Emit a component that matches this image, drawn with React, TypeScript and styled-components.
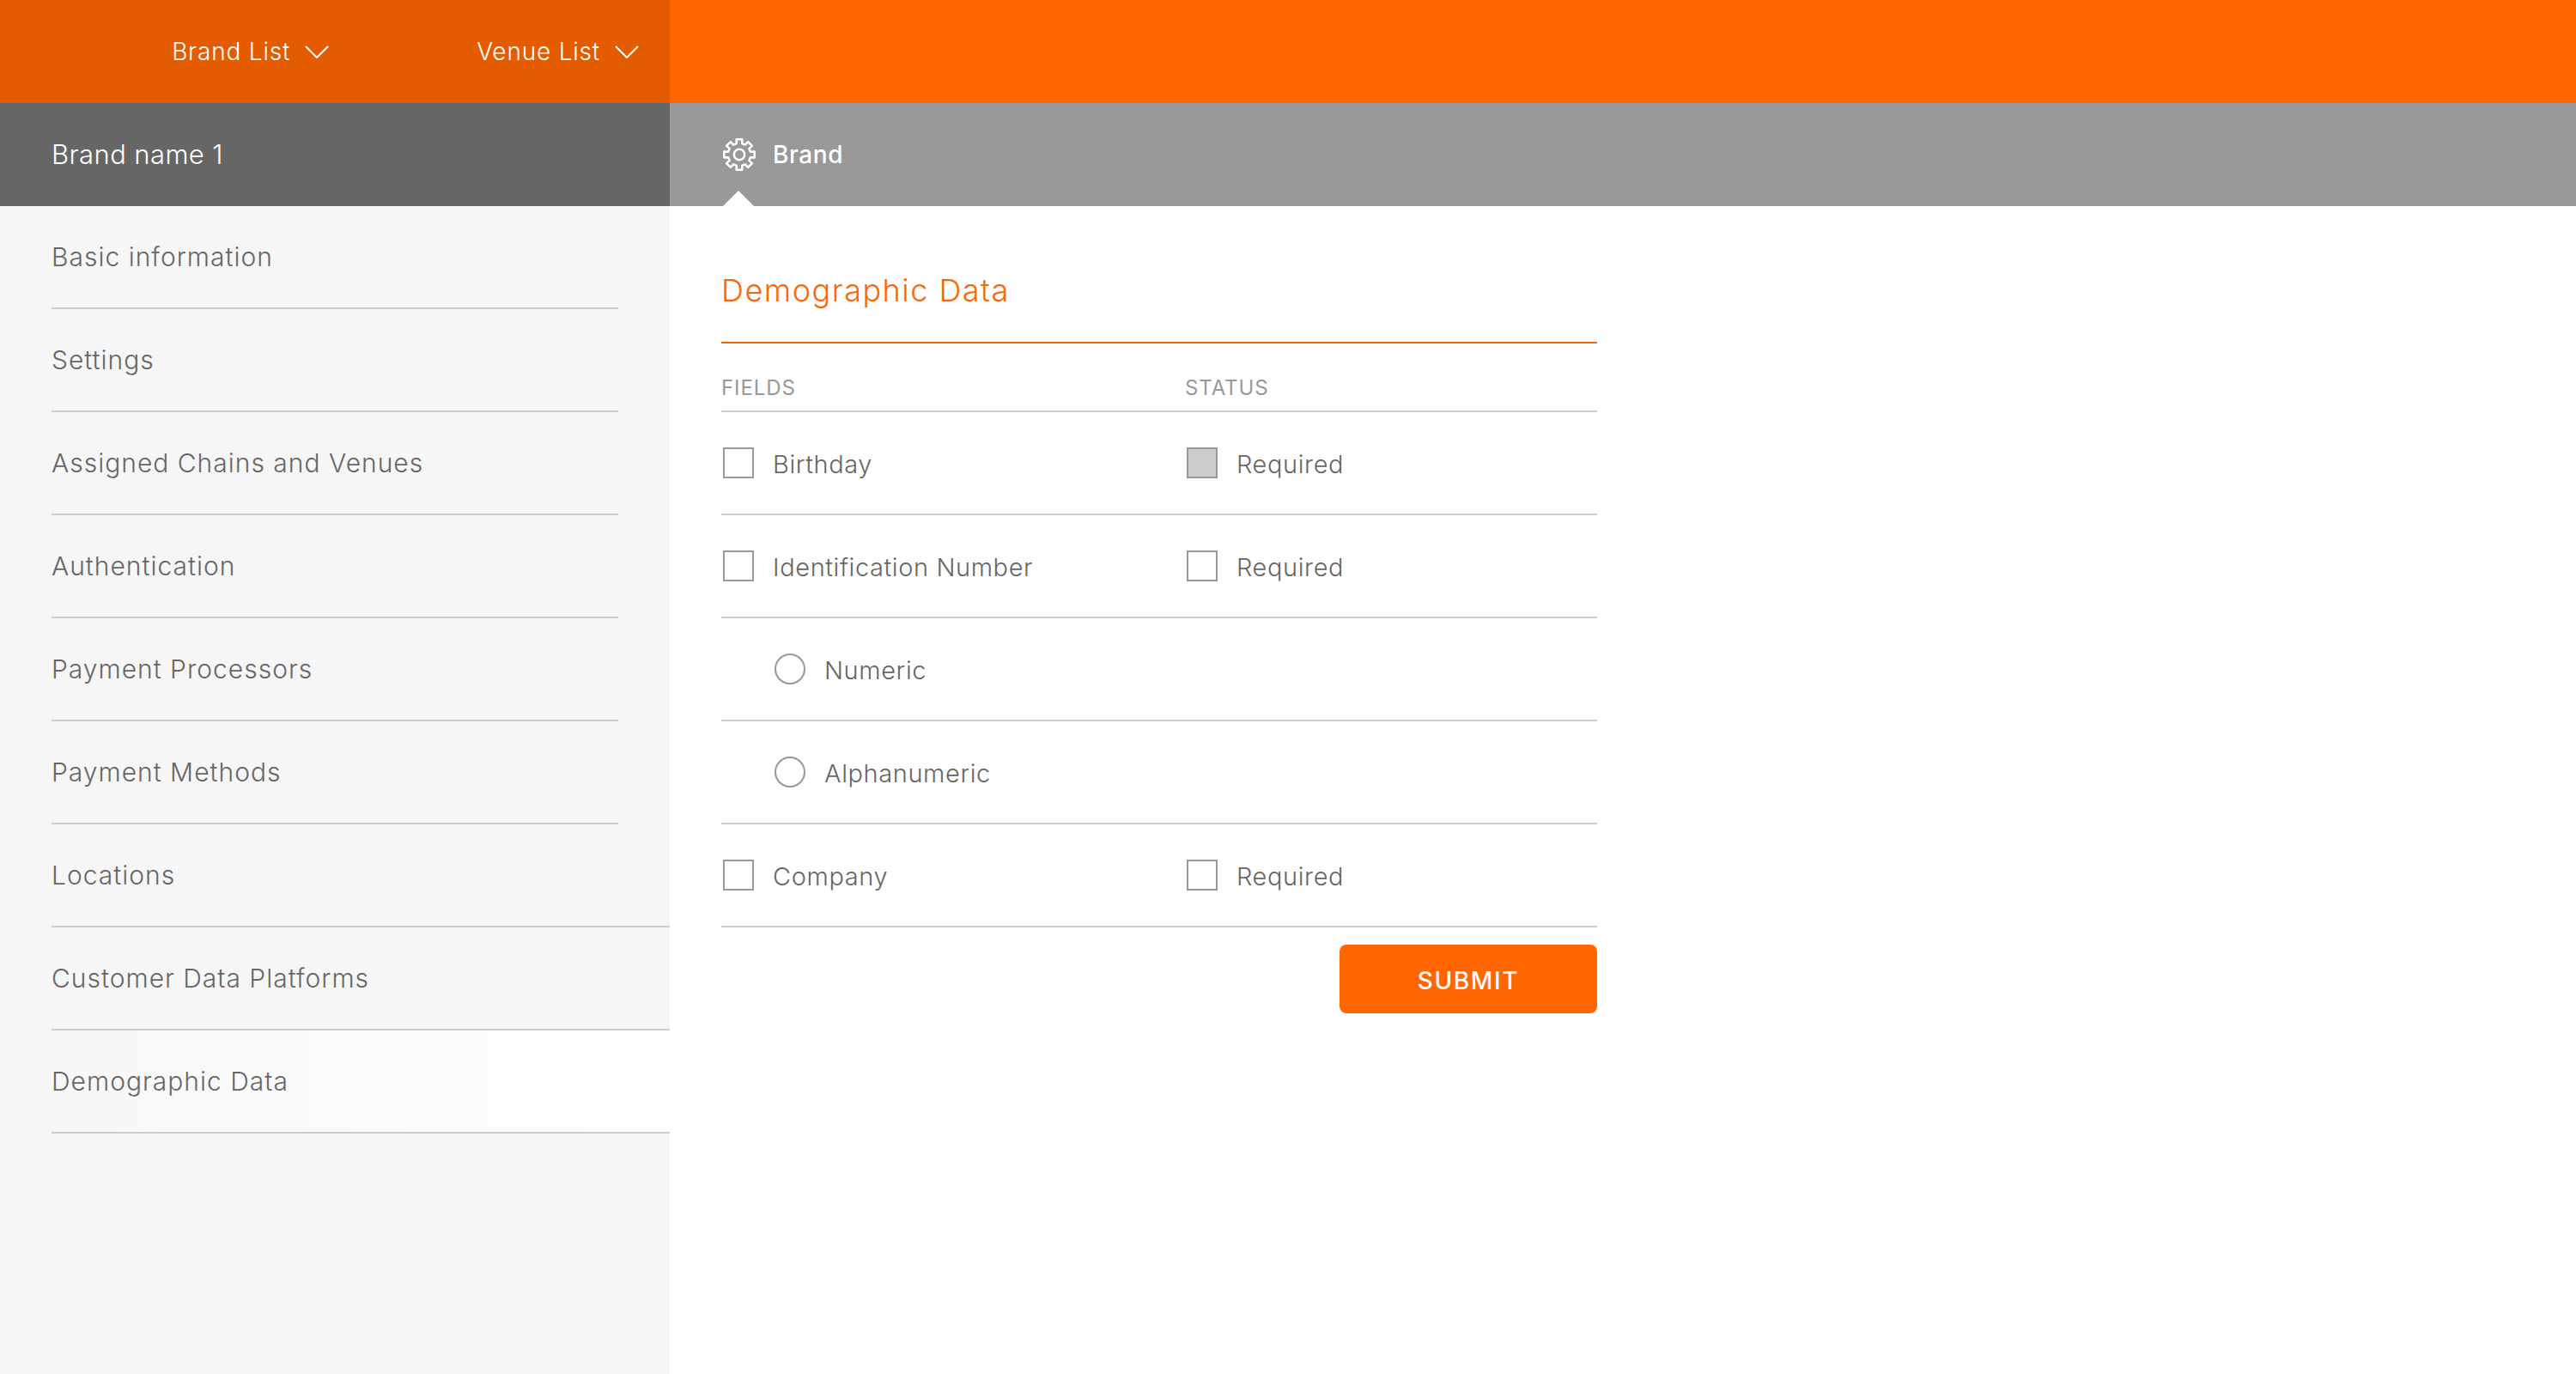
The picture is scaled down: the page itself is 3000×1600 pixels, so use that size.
import React from "react";
import styled, { createGlobalStyle } from "styled-components";

const Global = createGlobalStyle`
  html, body { margin: 0; padding: 0; background: #fff; }
  * { box-sizing: border-box; }
  body { font-family: "Inter", "Liberation Sans", sans-serif; }
`;

const Page = styled.div`
  width: 3000px;
  height: 1600px;
  display: grid;
  grid-template-columns: 780px 1fr;
  grid-template-rows: 120px 120px 1fr;
  overflow: hidden;
`;

const TopLeft = styled.div`
  background: #e35c00;
  display: flex;
  align-items: center;
  justify-content: flex-end;
  padding: 0 36px 0 0;
  gap: 172px;
`;

const TopRight = styled.div`
  background: #ff6600;
`;

const NavMenu = styled.div`
  display: flex;
  align-items: center;
  gap: 17px;
  color: #fff;
  font-size: 28px;
  font-weight: 300;
  letter-spacing: 0.8px;
`;

const BrandBar = styled.div`
  background: #666;
  color: #fff;
  display: flex;
  align-items: center;
  padding: 0 0 2px 60px;
  font-size: 31px;
  font-weight: 300;
  letter-spacing: 0.4px;
`;

const TabBar = styled.div`
  background: #999;
  padding-left: 60px;
  display: flex;
`;

const Tab = styled.div`
  position: relative;
  height: 100%;
  display: flex;
  align-items: center;
  gap: 20px;
  padding-left: 2px;
  color: #fff;
  font-size: 28px;
  font-weight: 500;
  letter-spacing: 0.6px;
  &::after {
    content: "";
    position: absolute;
    left: 2px;
    bottom: 0;
    border-left: 18px solid transparent;
    border-right: 18px solid transparent;
    border-bottom: 18px solid #fff;
  }
`;

const Sidebar = styled.nav`
  background: #f6f6f6;
  display: flex;
  flex-direction: column;
`;

const SideRow = styled.div<{ $wide?: boolean; $active?: boolean }>`
  height: 120px;
  flex: none;
  margin-left: 60px;
  margin-right: ${(p) => (p.$wide ? "0" : "60px")};
  display: flex;
  align-items: center;
  border-bottom: 2px solid #ccc;
  color: #666;
  font-size: 30px;
  font-weight: 300;
  letter-spacing: 1px;
  background: ${(p) => (p.$active ? "linear-gradient(90deg, #f7f7f7, #fff)" : "transparent")};
`;

const Main = styled.main`
  padding-left: 60px;
`;

const Form = styled.section`
  width: 1020px;
  display: flex;
  flex-direction: column;
`;

const Title = styled.h2`
  margin: 0;
  height: 160px;
  display: flex;
  align-items: center;
  border-bottom: 2px solid #ff6600;
  color: #ff6600;
  font-size: 36px;
  font-weight: 300;
  letter-spacing: 1.5px;
  padding-top: 37px;
`;

const HeadRow = styled.div`
  height: 80px;
  display: grid;
  grid-template-columns: 540px 1fr;
  align-items: center;
  border-bottom: 2px solid #ccc;
  color: #999;
  font-size: 24px;
  font-weight: 400;
  letter-spacing: 0.9px;
  padding-top: 24px;
`;

const Row = styled.div`
  height: 120px;
  display: grid;
  grid-template-columns: 540px 1fr;
  align-items: center;
  border-bottom: 2px solid #ccc;
`;

const Field = styled.label<{ $indent?: boolean }>`
  display: flex;
  align-items: center;
  gap: 22px;
  padding-left: ${(p) => (p.$indent ? "62px" : "2px")};
  color: #666;
  font-size: 29px;
  font-weight: 300;
  letter-spacing: 0.6px;
`;

const FieldText = styled.span`
  padding-top: 3px;
`;

const Box = styled.span<{ $checked?: boolean }>`
  width: 36px;
  height: 36px;
  flex: none;
  border: 2px solid #999;
  background: ${(p) => (p.$checked ? "#ccc" : "#fff")};
`;

const Radio = styled.span`
  width: 36px;
  height: 36px;
  flex: none;
  border: 2px solid #999;
  border-radius: 50%;
  background: #fff;
`;

const Actions = styled.div`
  display: flex;
  justify-content: flex-end;
  padding-top: 20px;
`;

const Submit = styled.button`
  width: 300px;
  height: 80px;
  border: 0;
  border-radius: 8px;
  background: #ff6600;
  color: #fff;
  font-family: inherit;
  font-size: 28px;
  font-weight: 500;
  letter-spacing: 1.6px;
  padding: 3px 0 0;
`;

const Chevron = () => (
  <svg width="28" height="15" viewBox="0 0 28 15" fill="none">
    <path d="M1 1 L14 14 L27 1" stroke="#fff" strokeWidth="2" />
  </svg>
);

const gearPath = (() => {
  const cx = 20, cy = 20, teeth = 8;
  const ro = 19, ri = 14;
  let d = "";
  for (let i = 0; i < teeth; i++) {
    const a = (i / teeth) * Math.PI * 2 - Math.PI / 2;
    const pts: [number, number][] = [
      [a - 0.24, ri], [a - 0.19, ro], [a + 0.19, ro], [a + 0.24, ri],
    ];
    pts.forEach(([t, r], j) => {
      const x = (cx + r * Math.cos(t)).toFixed(2);
      const y = (cy + r * Math.sin(t)).toFixed(2);
      d += `${i === 0 && j === 0 ? "M" : "L"}${x} ${y} `;
    });
  }
  return d + "Z";
})();

const Gear = () => (
  <svg width="38" height="38" viewBox="0 0 40 40" fill="none" stroke="#fff" strokeWidth="2.6" strokeLinejoin="round">
    <path d={gearPath} />
    <circle cx="20" cy="20" r="6.5" />
  </svg>
);

const menu = [
  "Basic information",
  "Settings",
  "Assigned Chains and Venues",
  "Authentication",
  "Payment Processors",
  "Payment Methods",
  "Locations",
  "Customer Data Platforms",
  "Demographic Data",
];

export default function App() {
  return (
    <Page>
      <Global />
      <TopLeft>
        <NavMenu>Brand List <Chevron /></NavMenu>
        <NavMenu>Venue List <Chevron /></NavMenu>
      </TopLeft>
      <TopRight />
      <BrandBar>Brand name 1</BrandBar>
      <TabBar>
        <Tab><Gear />Brand</Tab>
      </TabBar>
      <Sidebar>
        {menu.map((m, i) => (
          <SideRow key={m} $wide={i >= 6} $active={i === 8}>{m}</SideRow>
        ))}
      </Sidebar>
      <Main>
        <Form>
          <Title>Demographic Data</Title>
          <HeadRow><span>FIELDS</span><span>STATUS</span></HeadRow>
          <Row>
            <Field><Box /><FieldText>Birthday</FieldText></Field>
            <Field><Box $checked /><FieldText>Required</FieldText></Field>
          </Row>
          <Row>
            <Field><Box /><FieldText>Identification Number</FieldText></Field>
            <Field><Box /><FieldText>Required</FieldText></Field>
          </Row>
          <Row><Field $indent><Radio /><FieldText>Numeric</FieldText></Field></Row>
          <Row><Field $indent><Radio /><FieldText>Alphanumeric</FieldText></Field></Row>
          <Row>
            <Field><Box /><FieldText>Company</FieldText></Field>
            <Field><Box /><FieldText>Required</FieldText></Field>
          </Row>
          <Actions><Submit>SUBMIT</Submit></Actions>
        </Form>
      </Main>
    </Page>
  );
}
